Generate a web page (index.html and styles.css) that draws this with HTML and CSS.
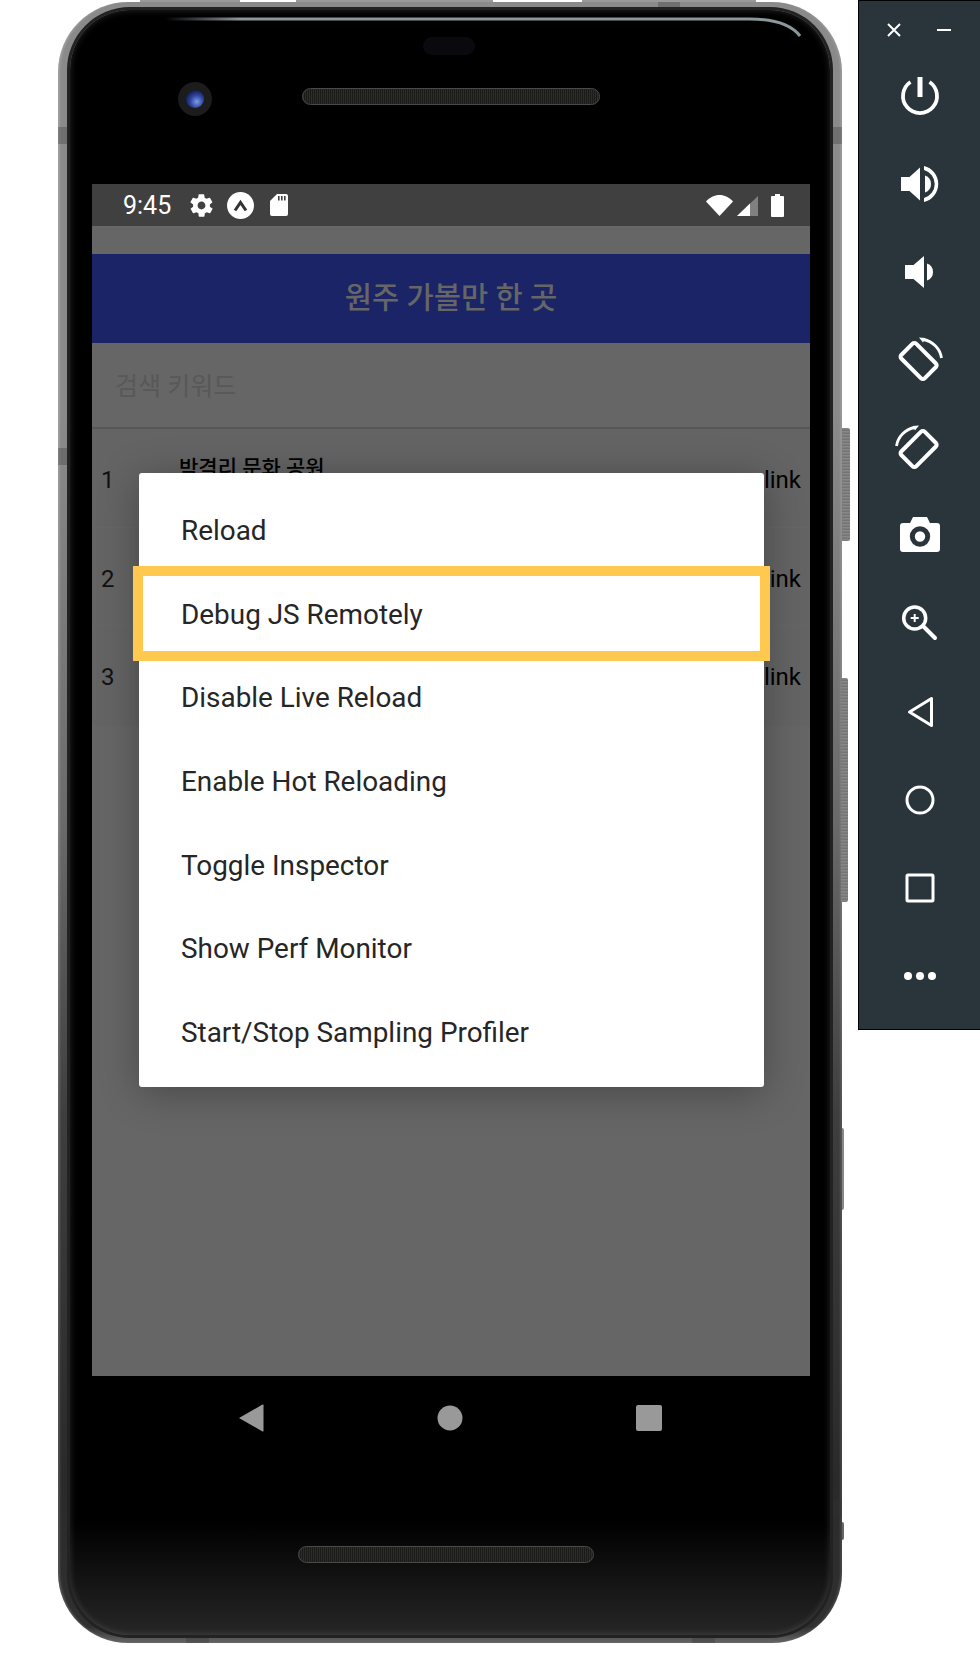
FILE: index.html
```html
<!DOCTYPE html>
<html lang="ko">
<head>
  <meta charset="UTF-8">
  <title>Android Emulator - Dev Menu</title>
  <link rel="stylesheet" href="styles.css">
</head>
<body>
  <div class="phone">
    <div class="hw top-edge"></div>
    <div class="hw power-key"></div>
    <div class="hw volume-key"></div>
    <div class="hw thin-key"></div>
    <div class="hw small-key"></div>
    <div class="band band-left-top"></div>
    <div class="band band-right-top"></div>
    <div class="band band-left-mid"></div>
    <div class="band band-top"></div>
    <div class="band band-bottom-left"></div>
    <div class="band band-bottom-right"></div>
    <div class="band band-right-low"></div>

    <div class="bezel">
      <svg class="glare" width="640" height="30" viewBox="0 0 640 30" fill="none">
        <defs>
          <linearGradient id="glareFade" x1="0" y1="0" x2="1" y2="0">
            <stop offset="0" stop-color="#000"/>
            <stop offset="0.12" stop-color="#8c979c"/>
            <stop offset="1" stop-color="#8c979c"/>
          </linearGradient>
        </defs>
        <path d="M0 3H585Q622 3 635 20" stroke="url(#glareFade)" stroke-width="3"/>
      </svg>
      <div class="sensor"></div>
      <div class="camera"><div class="lens"></div></div>
      <div class="speaker speaker-top"></div>

      <div class="screen">
        <div class="status-bar">
          <span class="time">9:45</span>
          <svg class="st-gear" width="27" height="27" viewBox="0 0 24 24" fill="#fff"><path d="M19.4 13c.1-.3.1-.6.1-1s0-.7-.1-1l2.100-1.600c.2-.2.2-.4.100-.6l-2-3.500c-.1-.2-.4-.3-.6-.2l-2.500 1c-.5-.4-1.100-.7-1.700-1l-.4-2.600c0-.2-.2-.4-.5-.4h-4c-.3 0-.5.2-.5.400l-.4 2.600c-.6.300-1.200.6-1.700 1l-2.500-1c-.2-.1-.5 0-.6.200l-2 3.500c-.1.200-.1.400.1.600L4.600 11c-.1.300-.1.700-.1 1s0 .7.100 1l-2.100 1.600c-.2.2-.2.400-.1.600l2 3.500c.1.200.4.300.6.200l2.500-1c.5.400 1.100.7 1.700 1l.4 2.600c0 .2.2.4.500.4h4c.3 0 .5-.2.500-.4l.4-2.600c.6-.3 1.200-.6 1.700-1l2.500 1c.2.100.5 0 .6-.2l2-3.500c.1-.2.1-.4-.1-.6L19.400 13zM12 15.500c-1.900 0-3.500-1.600-3.500-3.500s1.600-3.500 3.500-3.500 3.500 1.600 3.500 3.500-1.600 3.500-3.500 3.500z"/></svg>
          <svg class="st-badge" width="27" height="27" viewBox="0 0 27 27"><circle cx="13.500" cy="13.500" r="13.500" fill="#fff"/><path d="M8 18.500l5.500-8 5.500 8" fill="none" stroke="#333" stroke-width="3"/></svg>
          <svg width="18" height="22" viewBox="0 0 18 22" fill="#fff"><path d="M7 0h9a2 2 0 0 1 2 2v18a2 2 0 0 1-2 2H2a2 2 0 0 1-2-2V7z"/><path d="M8 2h1.600v4.500H8zM11 2h1.600v4.500H11zM14 2h1.600v4.500H14z" fill="#404040"/></svg>
          <span class="st-spacer"></span>
          <svg width="27" height="21" viewBox="0 0 27 21" fill="#fff"><path d="M0 6.500C3.500 2.500 8.500 0 13.500 0s10 2.500 13.500 6.500L13.500 21z"/></svg>
          <svg class="st-signal" width="21" height="20" viewBox="0 0 21 20"><path d="M0 20L21 0v20z" fill="#808080"/><path d="M0 20l13-12.400V20z" fill="#fff"/></svg>
          <svg width="13" height="23" viewBox="0 0 13 23" fill="#fff"><path d="M4 0h5v2h3a1 1 0 0 1 1 1v19a1 1 0 0 1-1 1H1a1 1 0 0 1-1-1V3a1 1 0 0 1 1-1h3z"/></svg>
        </div>

        <div class="app">
          <div class="app-header">원주 가볼만 한 곳</div>
          <div class="search-box">검색 키워드</div>
          <div class="list-row">
            <span class="row-num">1</span>
            <span class="row-title">박격리 문화 공원</span>
            <span class="row-link">link</span>
          </div>
          <div class="list-row">
            <span class="row-num">2</span>
            <span class="row-title"></span>
            <span class="row-link">link</span>
          </div>
          <div class="list-row">
            <span class="row-num">3</span>
            <span class="row-title"></span>
            <span class="row-link">link</span>
          </div>
        </div>

        <div class="dev-menu">
          <div class="menu-item">Reload</div>
          <div class="menu-item">Debug JS Remotely</div>
          <div class="menu-item">Disable Live Reload</div>
          <div class="menu-item">Enable Hot Reloading</div>
          <div class="menu-item">Toggle Inspector</div>
          <div class="menu-item">Show Perf Monitor</div>
          <div class="menu-item">Start/Stop Sampling Profiler</div>
        </div>
        <div class="highlight"></div>
      </div>

      <div class="nav-bar">
        <svg width="26" height="30" viewBox="0 0 26 30" fill="#999"><path d="M1 15L24.500 1.500q1-.4 1 .7v25.600q0 1.100-1 .7z"/></svg>
        <svg width="26" height="26" viewBox="0 0 26 26" fill="#999"><circle cx="13" cy="13" r="12.500"/></svg>
        <svg width="26" height="26" viewBox="0 0 26 26" fill="#999"><rect width="26" height="26" rx="2"/></svg>
      </div>
      <div class="speaker speaker-bottom"></div>
    </div>
  </div>

  <div class="side-panel">
    <div class="win-btns">
      <svg width="14" height="14" viewBox="0 0 14 14" stroke="#fff" stroke-width="2"><path d="M1 1l12 12M13 1L1 13"/></svg>
      <svg width="14" height="14" viewBox="0 0 14 14" fill="#fff"><rect y="6" width="14" height="2"/></svg>
    </div>
    <div class="tool-list">
      <!-- power -->
      <svg width="40" height="40" viewBox="0 2 40 40" fill="none" stroke="#fff" stroke-width="3.800"><path d="M10.500 8a17 17 0 1 0 19 0"/><path d="M20 3v20" stroke-width="5"/></svg>
      <!-- volume up -->
      <svg width="40" height="40" viewBox="0 0 40 40" fill="#fff"><path d="M1 13h8.500L20 3.500v33L9.500 27H1z"/><path d="M25 11.500a9 9 0 0 1 0 17z"/><path d="M24 2a18.500 18.500 0 0 1 0 36v-4a14.500 14.500 0 0 0 0-28z"/></svg>
      <!-- volume down -->
      <svg width="40" height="40" viewBox="0 0 40 40" fill="#fff"><path d="M5 13h8.500L24 4v32L13.500 27H5z"/><path d="M27 11.500a9 9 0 0 1 0 17z"/></svg>
      <!-- rotate right -->
      <svg width="48" height="48" viewBox="0 0 48 48" fill="none" stroke="#fff"><rect x="12.100" y="8.500" width="21" height="33" rx="2.500" transform="rotate(-45 22.600 25)" stroke-width="4"/><path d="M27 3.500a22 22 0 0 1 18.500 18.500" stroke-width="2.800"/><path d="M23 1.500l6.500.5-2.500 4.500z" fill="#fff" stroke="none"/></svg>
      <!-- rotate left -->
      <svg width="48" height="48" viewBox="0 0 48 48" fill="none" stroke="#fff"><rect x="12.100" y="8.500" width="21" height="33" rx="2.500" transform="rotate(45 22.600 25)" stroke-width="4"/><path d="M19 3.500A22 22 0 0 0 .5 22" stroke-width="2.800"/><path d="M23 1.500l-6.500.5 2.500 4.500z" fill="#fff" stroke="none"/></svg>
      <!-- camera -->
      <svg width="40" height="40" viewBox="0 1 40 40" fill="#fff"><path d="M13 2h14l3 6h7a3 3 0 0 1 3 3v23a3 3 0 0 1-3 3H3a3 3 0 0 1-3-3V11a3 3 0 0 1 3-3h7z"/><circle cx="20" cy="21.500" r="7.700" fill="none" stroke="#29343b" stroke-width="5"/></svg>
      <!-- zoom -->
      <svg width="40" height="40" viewBox="0 0 40 40" fill="none" stroke="#fff"><circle cx="14.700" cy="14" r="11" stroke-width="3.500"/><path d="M23 22l12 12" stroke-width="4" stroke-linecap="round"/><path d="M14.700 10v8M10.700 14h8" stroke-width="2"/></svg>
      <!-- back -->
      <svg width="40" height="40" viewBox="0 0 40 40" fill="none" stroke="#fff" stroke-width="3" stroke-linejoin="round"><path d="M9.500 20L31.500 6.500v27z"/></svg>
      <!-- home -->
      <svg width="40" height="40" viewBox="0 0 40 40" fill="none" stroke="#fff" stroke-width="3"><circle cx="20" cy="20" r="13"/></svg>
      <!-- overview -->
      <svg width="40" height="40" viewBox="0 0 40 40" fill="none" stroke="#fff" stroke-width="3" stroke-linejoin="round"><rect x="7" y="7" width="26" height="26" rx="1"/></svg>
      <!-- more -->
      <svg width="40" height="40" viewBox="0 0 40 40" fill="#fff"><circle cx="8" cy="20" r="4"/><circle cx="20" cy="20" r="4"/><circle cx="32" cy="20" r="4"/></svg>
    </div>
  </div>
</body>
</html>
```

FILE: styles.css
```css
body {
  margin: 0;
  width: 980px;
  height: 1680px;
  display: flex;
  align-items: flex-start;
  background-color: #fff;
  font-family: Roboto, "Noto Sans CJK KR", sans-serif;
  overflow: hidden;
}

.phone {
  position: relative;
  flex: none;
  width: 784px;
  height: 1641px;
  margin: 2px 0 0 58px;
  padding: 8px 12px;
  box-sizing: border-box;
  border-radius: 70px;
  background: linear-gradient(#8a8a8a 0, #8a8a8a 25%, #6a6a6a 50%, #3e3e3e 68%, #2a2a2a 90%, #303030 99%, #666 100%);
  box-shadow: inset 3px 0 2px -1px rgba(255, 255, 255, 0.18), inset -3px 0 2px -1px rgba(255, 255, 255, 0.12);
}

/* keys and edge pieces on the outside of the body */
.hw {
  position: absolute;
  border-radius: 0 2px 2px 0;
}

.top-edge {
  left: 82px;
  top: -2px;
  width: 616px;
  height: 2px;
  border-radius: 0;
  background: linear-gradient(90deg,
    #999 0, #999 100px, transparent 100px, transparent 156px,
    #999 156px, #999 353px, transparent 353px, transparent 442px,
    #999 442px, #999 616px);
}

.power-key {
  left: 784px;
  top: 426px;
  width: 8px;
  height: 113px;
  background: repeating-linear-gradient(#8c8c8c 0, #707070 3px);
}

.volume-key {
  left: 783px;
  top: 676px;
  width: 7px;
  height: 224px;
  background: repeating-linear-gradient(#8c8c8c 0, #707070 3px);
}

.thin-key {
  left: 784px;
  top: 1126px;
  width: 2px;
  height: 82px;
  background-color: #888;
}

.small-key {
  left: 784px;
  top: 1520px;
  width: 2px;
  height: 18px;
  background-color: #666;
}

/* antenna lines cut through the metal */
.band {
  position: absolute;
  width: 12px;
  height: 17px;
  background-color: rgba(50, 50, 50, 0.3);
}

.band-left-top {
  left: 0;
  top: 125px;
}

.band-right-top {
  left: 772px;
  top: 125px;
}

.band-left-mid {
  left: 0;
  top: 446px;
}

.band-top {
  left: 600px;
  top: 0;
  width: 22px;
  height: 8px;
}

.band-bottom-left {
  left: 128px;
  top: 1631px;
  width: 23px;
  height: 10px;
}

.band-bottom-right {
  left: 634px;
  top: 1631px;
  width: 23px;
  height: 10px;
}

.band-right-low {
  left: 772px;
  top: 1498px;
}

.bezel {
  position: relative;
  display: flex;
  flex-direction: column;
  height: 100%;
  padding: 174px 20px 0 22px;
  box-sizing: border-box;
  border-radius: 60px;
  background: linear-gradient(#000 0, #000 93%, #262626 100%);
  box-shadow: 0 0 0 3px #222, inset 0 0 7px rgba(255, 255, 255, 0.16);
}

.glare {
  position: absolute;
  left: 95px;
  top: 6px;
}

.sensor {
  position: absolute;
  left: 353px;
  top: 27px;
  width: 52px;
  height: 18px;
  border-radius: 9px;
  background-color: #0a0a0e;
}

.camera {
  position: absolute;
  left: 108px;
  top: 72px;
  width: 34px;
  height: 34px;
  display: flex;
  align-items: center;
  justify-content: center;
  border-radius: 50%;
  background-color: #1c1c1c;
}

.lens {
  width: 18px;
  height: 18px;
  border-radius: 50%;
  background: radial-gradient(circle at 60% 65%, #7f9be6 0, #2f45a0 40%, #0a1030 85%);
}

.speaker {
  position: absolute;
  width: 296px;
  height: 17px;
  box-sizing: border-box;
  border-radius: 9px;
  border: 1px solid #4a4a46;
  background: repeating-linear-gradient(90deg, #2e2d2a 0, #2e2d2a 1px, #1a1a18 1px, #1a1a18 2px);
}

.speaker-top {
  left: 232px;
  top: 78px;
  width: 298px;
}

.speaker-bottom {
  left: 228px;
  top: 1536px;
}

.screen {
  position: relative;
  height: 1192px;
  background-color: #666;
}

.status-bar {
  display: flex;
  align-items: center;
  height: 42px;
  padding: 0 26px 0 31px;
  background-color: #404040;
  color: #fff;
}

.time {
  font-size: 25px;
  margin-right: 17px;
}

.st-gear {
  margin-right: 12px;
}

.st-badge {
  margin-right: 16px;
}

.st-spacer {
  flex: 1;
}

.st-signal {
  margin: 2px 13px 0 4px;
}

.app {
  padding-top: 28px;
}

.app-header {
  height: 89px;
  line-height: 89px;
  text-align: center;
  font-size: 29.600px;
  font-weight: 500;
  color: #666;
  background-color: #1a2466;
}

.search-box {
  height: 84px;
  line-height: 88px;
  padding-left: 23px;
  font-size: 25px;
  color: #585858;
  border-bottom: 2px solid #575757;
}

.list-row {
  display: flex;
  height: 98.5px;
  box-sizing: border-box;
  padding: 0 9px;
  color: #000;
  background-color: #646464;
  border-bottom: 1px solid #666;
  font-size: 24px;
}

.list-row:last-child {
  height: 101px;
}

.row-num {
  width: 78px;
  line-height: 102px;
  color: #111;
}

.row-title {
  flex: 1;
  padding-top: 27px;
  line-height: 24px;
  font-size: 21px;
  font-weight: 500;
}

.row-link {
  line-height: 102px;
}

.dev-menu {
  position: absolute;
  left: 47px;
  top: 289px;
  width: 625px;
  height: 614px;
  border-radius: 3px;
  background-color: #fff;
  box-shadow: 0 6px 40px rgba(0, 0, 0, 0.3);
}

.menu-item {
  height: 83.700px;
  line-height: 116px;
  padding-left: 42px;
  font-size: 27.900px;
  color: #262626;
}

.highlight {
  position: absolute;
  left: 41px;
  top: 382px;
  width: 637px;
  height: 95px;
  box-sizing: border-box;
  border: 10px solid #ffc94f;
}

.nav-bar {
  display: flex;
  justify-content: space-between;
  align-items: center;
  width: 424px;
  margin: 27px 0 0 146px;
}

.side-panel {
  flex: none;
  width: 122px;
  height: 1030px;
  margin-left: 16px;
  box-sizing: border-box;
  background-color: #29343b;
  border: 1px solid #000;
  border-right: 0;
}

.win-btns {
  display: flex;
  justify-content: space-between;
  padding: 22px 29px 0 28px;
}

.tool-list {
  display: grid;
  grid-auto-rows: 88px;
  justify-items: center;
  align-items: center;
  margin-top: 15px;
}

.tool-list svg {
  overflow: visible;
}
```
